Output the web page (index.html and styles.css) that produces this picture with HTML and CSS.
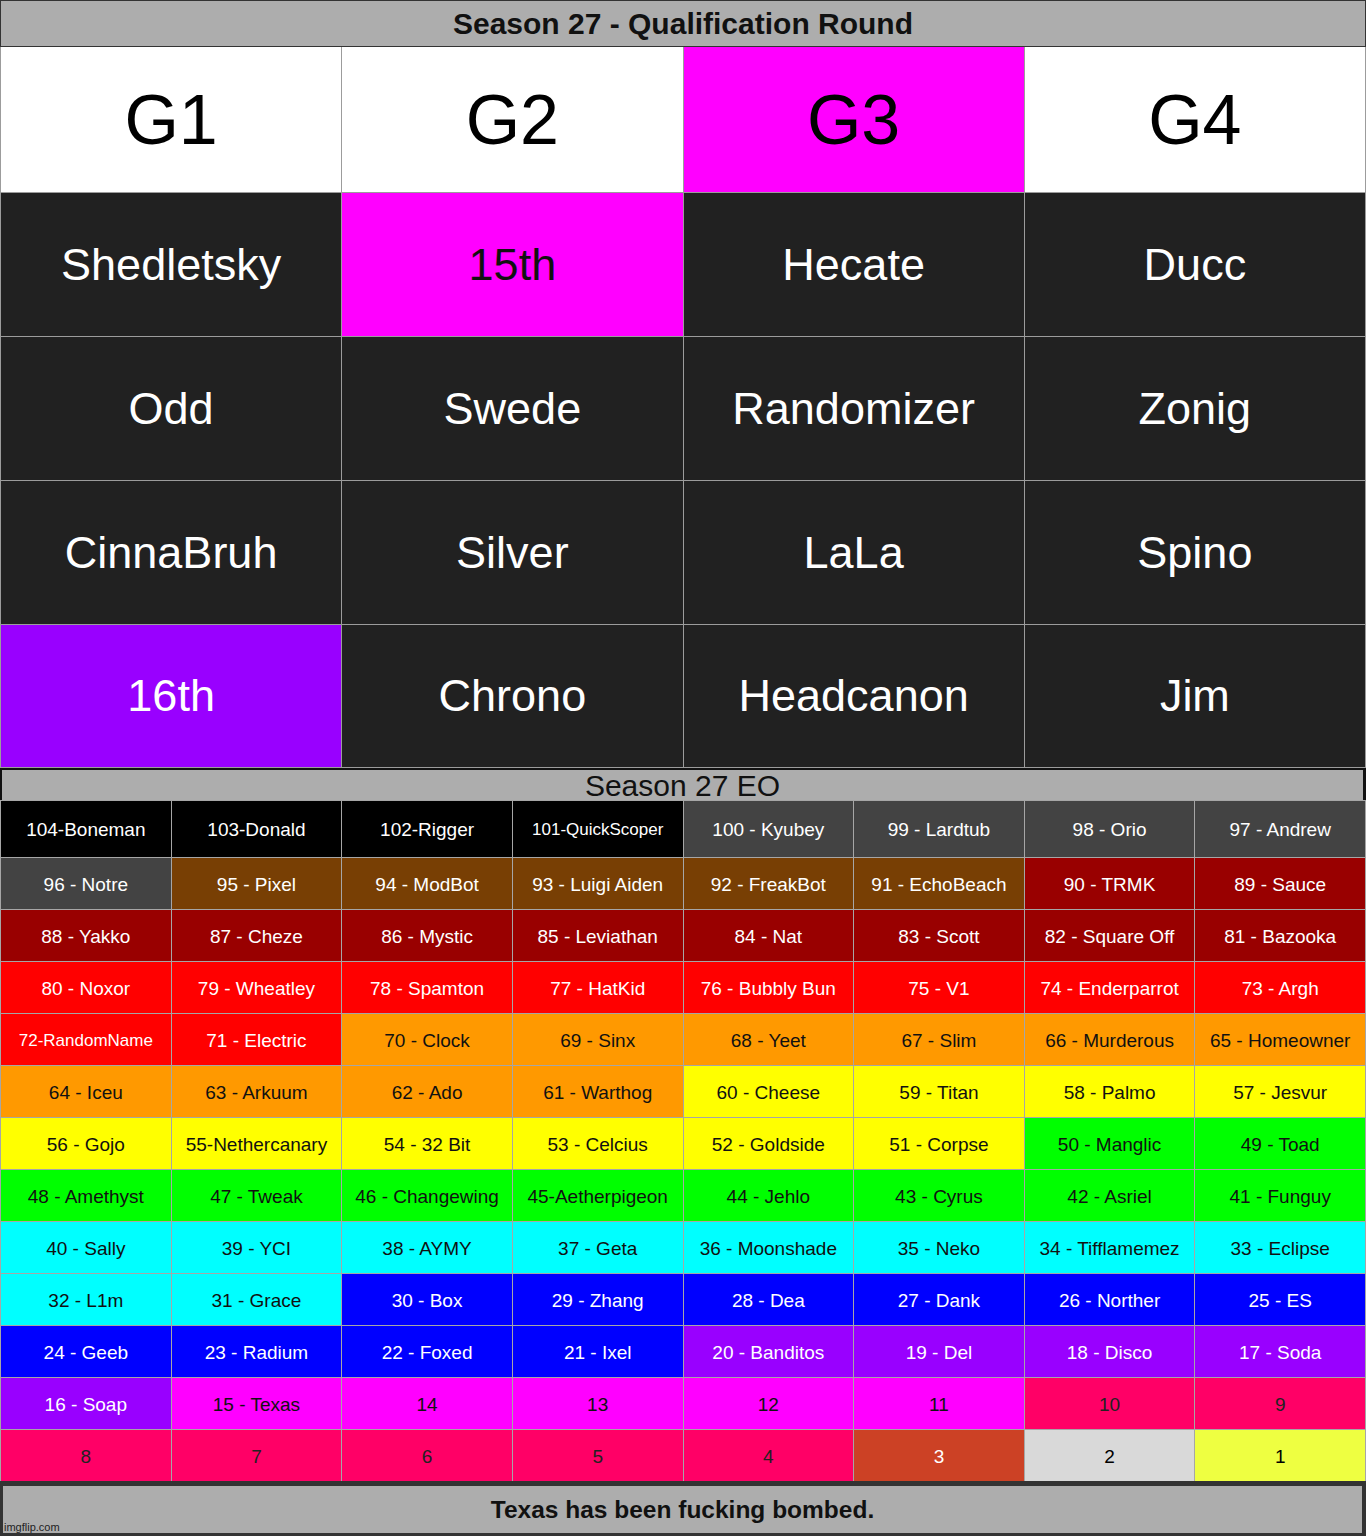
FILE: index.html
```html
<!DOCTYPE html>
<html>
<head>
<meta charset="utf-8">
<title>Season 27</title>
<link rel="stylesheet" href="styles.css">
</head>
<body>
<div class="page">
  <header class="title">Season 27 - Qualification Round</header>
  <div class="qgrid">
    <div class="qcell g">G1</div>
    <div class="qcell g">G2</div>
    <div class="qcell g mag">G3</div>
    <div class="qcell g">G4</div>
    <div class="qcell">Shedletsky</div>
    <div class="qcell mag">15th</div>
    <div class="qcell">Hecate</div>
    <div class="qcell">Ducc</div>
    <div class="qcell">Odd</div>
    <div class="qcell">Swede</div>
    <div class="qcell">Randomizer</div>
    <div class="qcell">Zonig</div>
    <div class="qcell">CinnaBruh</div>
    <div class="qcell">Silver</div>
    <div class="qcell">LaLa</div>
    <div class="qcell">Spino</div>
    <div class="qcell purple">16th</div>
    <div class="qcell">Chrono</div>
    <div class="qcell">Headcanon</div>
    <div class="qcell">Jim</div>
  </div>
  <section class="eo">
    <div class="eohead">Season 27 EO</div>
    <div class="eogrid">
      <div class="c black">104-Boneman</div>
      <div class="c black">103-Donald</div>
      <div class="c black">102-Rigger</div>
      <div class="c black s17">101-QuickScoper</div>
      <div class="c dgray">100 - Kyubey</div>
      <div class="c dgray">99 - Lardtub</div>
      <div class="c dgray">98 - Orio</div>
      <div class="c dgray">97 - Andrew</div>

      <div class="c dgray">96 - Notre</div>
      <div class="c brown">95 - Pixel</div>
      <div class="c brown">94 - ModBot</div>
      <div class="c brown">93 - Luigi Aiden</div>
      <div class="c brown">92 - FreakBot</div>
      <div class="c brown">91 - EchoBeach</div>
      <div class="c dred">90 - TRMK</div>
      <div class="c dred">89 - Sauce</div>

      <div class="c dred">88 - Yakko</div>
      <div class="c dred">87 - Cheze</div>
      <div class="c dred">86 - Mystic</div>
      <div class="c dred">85 - Leviathan</div>
      <div class="c dred">84 - Nat</div>
      <div class="c dred">83 - Scott</div>
      <div class="c dred">82 - Square Off</div>
      <div class="c dred">81 - Bazooka</div>

      <div class="c red">80 - Noxor</div>
      <div class="c red">79 - Wheatley</div>
      <div class="c red">78 - Spamton</div>
      <div class="c red">77 - HatKid</div>
      <div class="c red">76 - Bubbly Bun</div>
      <div class="c red">75 - V1</div>
      <div class="c red">74 - Enderparrot</div>
      <div class="c red">73 - Argh</div>

      <div class="c red s17">72-RandomName</div>
      <div class="c red">71 - Electric</div>
      <div class="c orange">70 - Clock</div>
      <div class="c orange">69 - Sinx</div>
      <div class="c orange">68 - Yeet</div>
      <div class="c orange">67 - Slim</div>
      <div class="c orange">66 - Murderous</div>
      <div class="c orange">65 - Homeowner</div>

      <div class="c orange">64 - Iceu</div>
      <div class="c orange">63 - Arkuum</div>
      <div class="c orange">62 - Ado</div>
      <div class="c orange">61 - Warthog</div>
      <div class="c yellow">60 - Cheese</div>
      <div class="c yellow">59 - Titan</div>
      <div class="c yellow">58 - Palmo</div>
      <div class="c yellow">57 - Jesvur</div>

      <div class="c yellow">56 - Gojo</div>
      <div class="c yellow">55-Nethercanary</div>
      <div class="c yellow">54 - 32 Bit</div>
      <div class="c yellow">53 - Celcius</div>
      <div class="c yellow">52 - Goldside</div>
      <div class="c yellow">51 - Corpse</div>
      <div class="c green">50 - Manglic</div>
      <div class="c green">49 - Toad</div>

      <div class="c green">48 - Amethyst</div>
      <div class="c green">47 - Tweak</div>
      <div class="c green">46 - Changewing</div>
      <div class="c green">45-Aetherpigeon</div>
      <div class="c green">44 - Jehlo</div>
      <div class="c green">43 - Cyrus</div>
      <div class="c green">42 - Asriel</div>
      <div class="c green">41 - Funguy</div>

      <div class="c cyan">40 - Sally</div>
      <div class="c cyan">39 - YCI</div>
      <div class="c cyan">38 - AYMY</div>
      <div class="c cyan">37 - Geta</div>
      <div class="c cyan">36 - Moonshade</div>
      <div class="c cyan">35 - Neko</div>
      <div class="c cyan">34 - Tifflamemez</div>
      <div class="c cyan">33 - Eclipse</div>

      <div class="c cyan">32 - L1m</div>
      <div class="c cyan">31 - Grace</div>
      <div class="c blue">30 - Box</div>
      <div class="c blue">29 - Zhang</div>
      <div class="c blue">28 - Dea</div>
      <div class="c blue">27 - Dank</div>
      <div class="c blue">26 - Norther</div>
      <div class="c blue">25 - ES</div>

      <div class="c blue">24 - Geeb</div>
      <div class="c blue">23 - Radium</div>
      <div class="c blue">22 - Foxed</div>
      <div class="c blue">21 - Ixel</div>
      <div class="c purple">20 - Banditos</div>
      <div class="c purple">19 - Del</div>
      <div class="c purple">18 - Disco</div>
      <div class="c purple">17 - Soda</div>

      <div class="c purple">16 - Soap</div>
      <div class="c mag">15 - Texas</div>
      <div class="c mag">14</div>
      <div class="c mag">13</div>
      <div class="c mag">12</div>
      <div class="c mag">11</div>
      <div class="c pink">10</div>
      <div class="c pink">9</div>

      <div class="c pink">8</div>
      <div class="c pink">7</div>
      <div class="c pink">6</div>
      <div class="c pink">5</div>
      <div class="c pink">4</div>
      <div class="c rust">3</div>
      <div class="c lgray">2</div>
      <div class="c lyellow">1</div>
    </div>
  </section>
  <footer class="foot">
    <div class="footin">Texas has been fucking bombed.</div>
    <span class="wm">imgflip.com</span>
  </footer>
</div>
</body>
</html>
```
FILE: styles.css
```css
html, body {
  margin: 0;
  padding: 0;
  background: #111;
}
body {
  font-family: "Liberation Sans", Arial, sans-serif;
}
.page {
  width: 1366px;
  height: 1536px;
  overflow: hidden;
  background: #111;
}
.title {
  height: 47px;
  box-sizing: border-box;
  border: 1px solid #333;
  background: #adadad;
  color: #111;
  font-weight: bold;
  font-size: 30px;
  display: flex;
  align-items: center;
  justify-content: center;
}
.qgrid {
  display: grid;
  grid-template-columns: repeat(4, 1fr);
  grid-template-rows: 145px 143px 143px 143px 142px;
  gap: 1px;
  padding: 0 1px 1px;
  background: #9c9c9c;
}
.qcell {
  display: flex;
  align-items: center;
  justify-content: center;
  font-size: 45px;
  background: #212121;
  color: #fff;
}
.qcell.g {
  font-size: 70px;
  background: #fff;
  color: #000;
}
.eo {
  padding-top: 2px;
  background: #111;
}
.eohead {
  height: 30px;
  margin: 0 3px 0 2px;
  background: #adadad;
  color: #111;
  font-size: 30px;
  line-height: 32px;
  text-align: center;
}
.eogrid {
  display: grid;
  grid-template-columns: repeat(8, 1fr);
  grid-template-rows: 56px repeat(12, 51px);
  gap: 1px;
  padding: 1px 1px 0;
  background: #a6a6a6;
}
.c {
  display: flex;
  align-items: center;
  justify-content: center;
  padding-top: 2px;
  box-sizing: border-box;
  font-size: 19px;
  white-space: nowrap;
  color: #000;
}
.s17 { font-size: 17px; }

.black { background: #000; color: #fff; }
.dgray { background: #434343; color: #fff; }
.brown { background: #783f04; color: #fff; }
.dred { background: #990000; color: #fff; }
.red { background: #ff0000; color: #fff; }
.orange { background: #ff9900; color: #111; }
.yellow { background: #ffff00; color: #111; }
.green { background: #00ff00; color: #111; }
.cyan { background: #00ffff; color: #111; }
.blue { background: #0000ff; color: #fff; }
.purple { background: #9900ff; color: #fff; }
.mag { background: #ff00ff; color: #111; }
.qcell.g.mag { background: #ff00ff; color: #000; }
.pink { background: #ff0066; color: #222; }
.rust { background: #cc4125; color: #fff; }
.lgray { background: #d9d9d9; color: #000; }
.lyellow { background: #eeff41; color: #000; }

.foot {
  position: relative;
  height: 55px;
  box-sizing: border-box;
  padding: 5px 4px 3px 3px;
  background: #333;
}
.footin {
  height: 100%;
  background: #adadad;
  color: #111;
  font-weight: bold;
  font-size: 24.5px;
  display: flex;
  align-items: center;
  justify-content: center;
}
.wm {
  position: absolute;
  left: 4px;
  bottom: 3px;
  font-size: 11px;
  color: #222;
}
```
